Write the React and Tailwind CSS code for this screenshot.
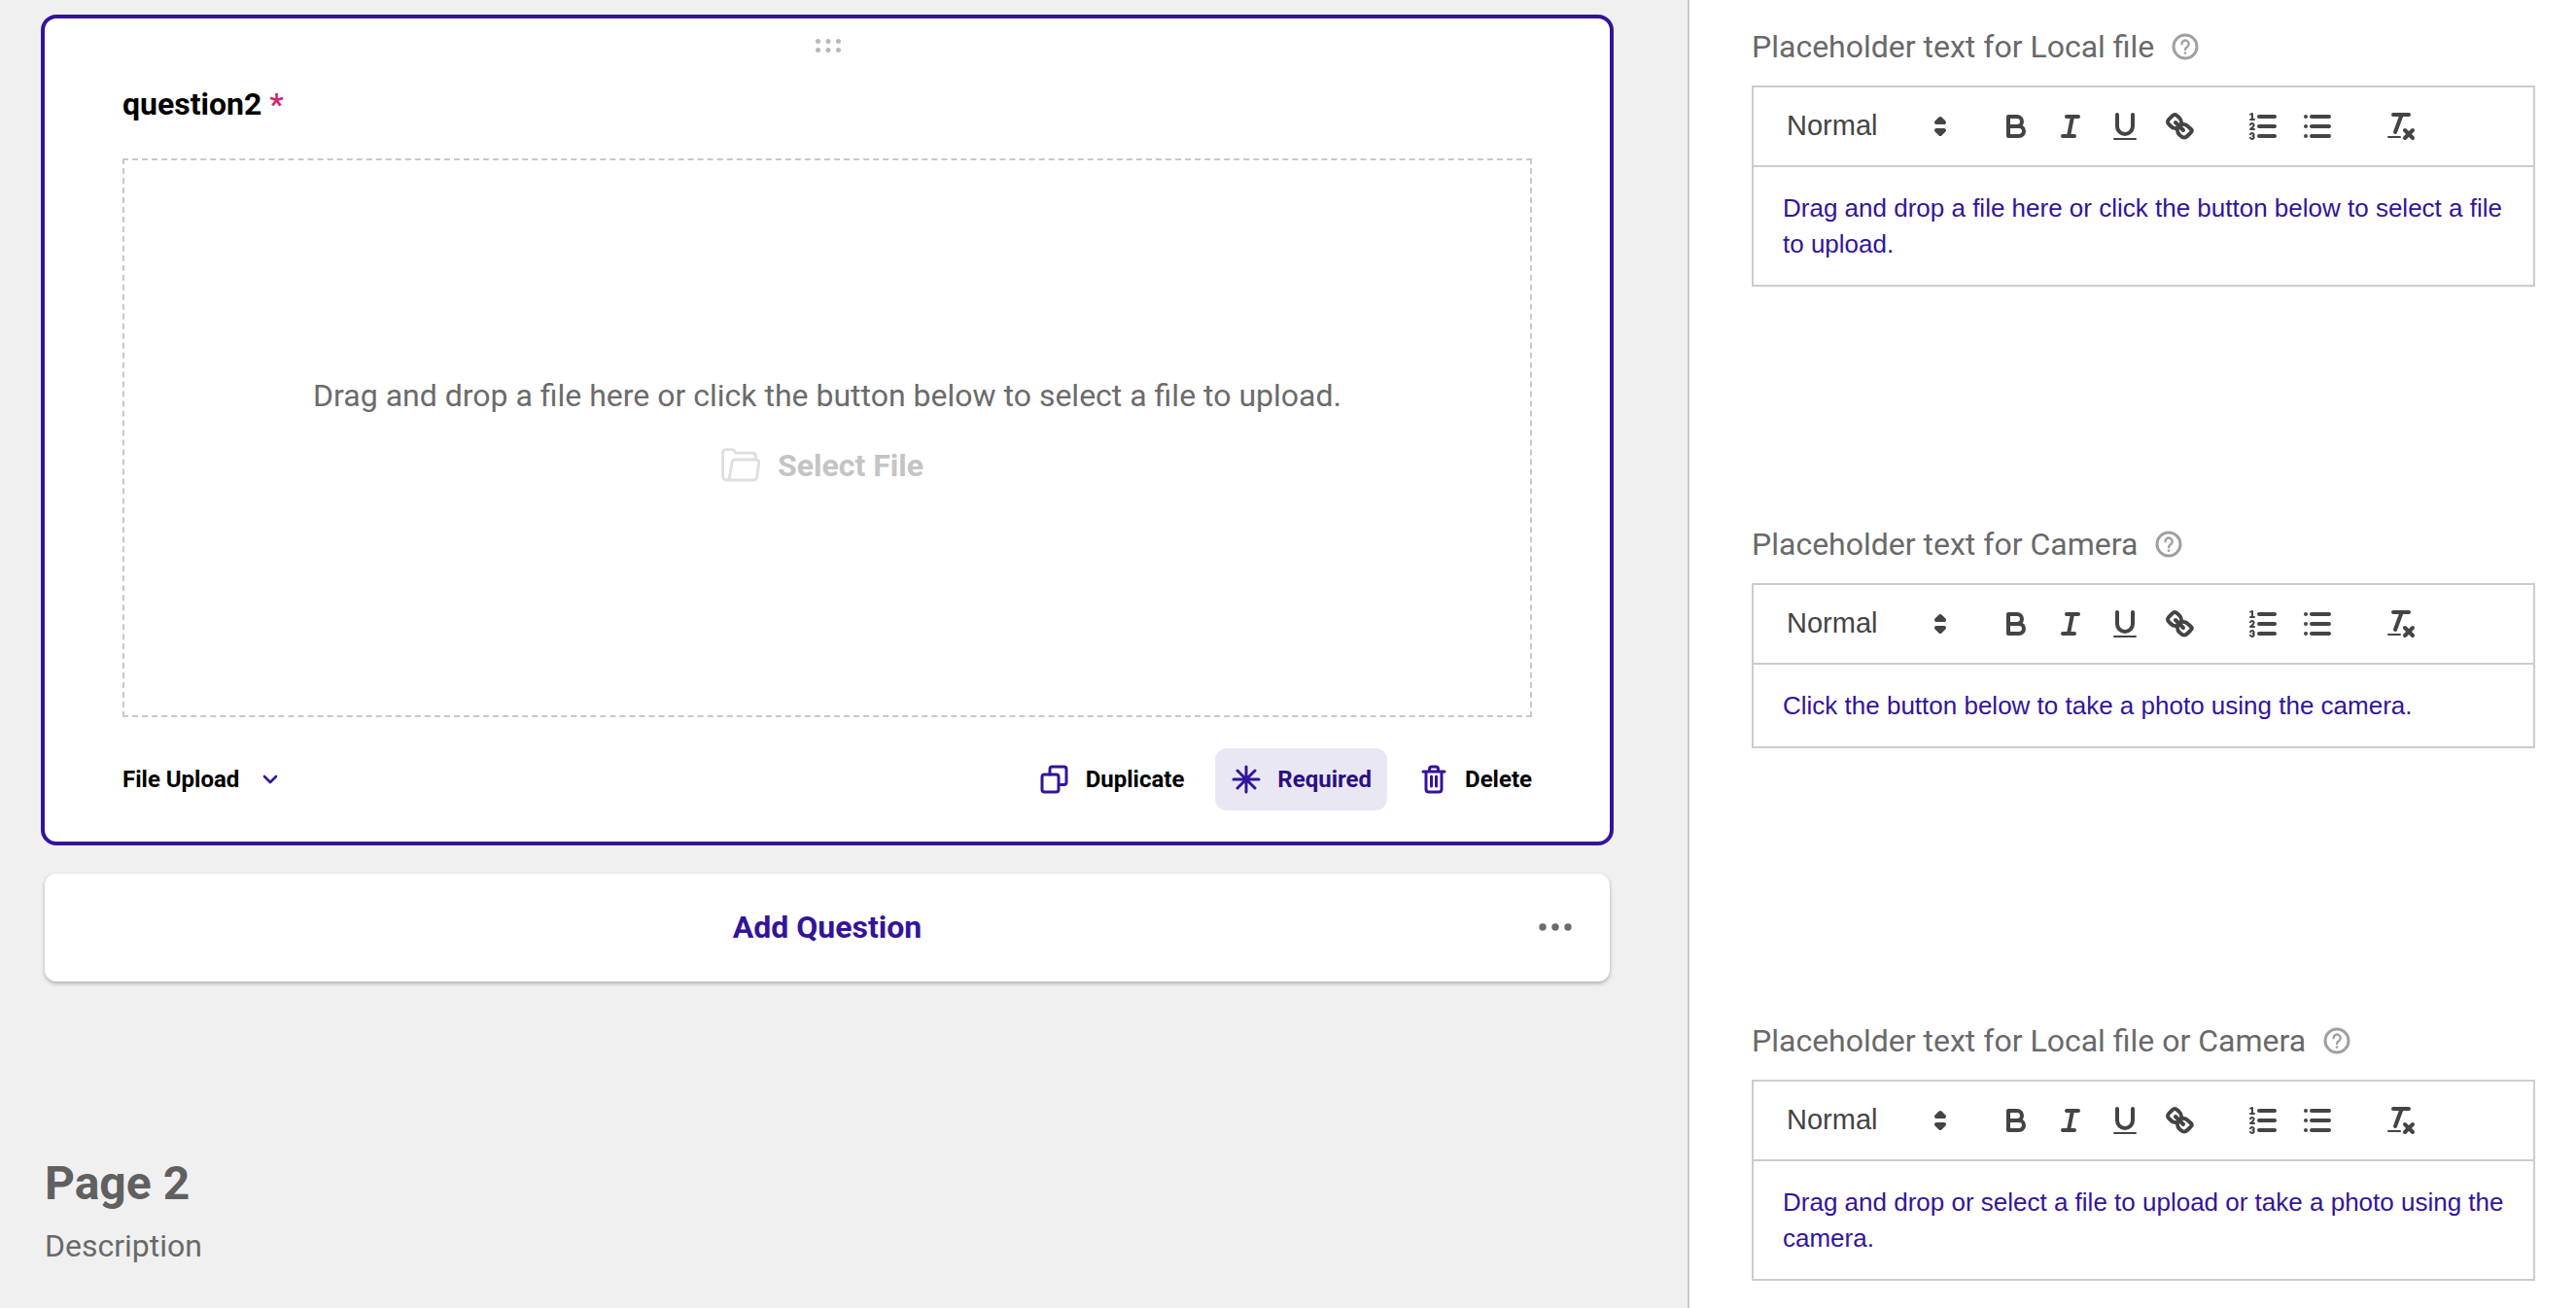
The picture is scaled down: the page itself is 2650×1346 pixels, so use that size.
import React from "react";

const P = "#33149b";

function Stroke({ children, className = "" }) {
  return (
    <svg viewBox="0 0 18 18" width="36" height="36" fill="none" stroke="#444" strokeWidth="2" strokeLinecap="round" strokeLinejoin="round" className={className}>
      {children}
    </svg>
  );
}

function Btn({ children }) {
  return <div className="w-14 h-12 flex items-center justify-center">{children}</div>;
}

function Toolbar() {
  return (
    <div className="h-[82px] border-b-2 border-[#cccccc] pl-4 flex items-center">
      <div className="w-[196px] h-12 mr-[30px] flex items-center justify-between pl-[18px] pr-[2px] text-[29px] text-[#444444] font-['Liberation_Sans',sans-serif]">
        <span>Normal</span>
        <svg viewBox="0 0 18 18" width="36" height="36" fill="#444" stroke="#444" strokeWidth="2" strokeLinejoin="round">
          <polygon points="7 11 9 13 11 11 7 11" />
          <polygon points="7 7 9 5 11 7 7 7" />
        </svg>
      </div>
      <div className="flex mr-[30px]">
        <Btn>
          <Stroke>
            <path d="M5,4H9.5A2.5,2.5,0,0,1,12,6.5v0A2.5,2.5,0,0,1,9.5,9H5A0,0,0,0,1,5,9V4A0,0,0,0,1,5,4Z" />
            <path d="M5,9h5.5A2.5,2.5,0,0,1,13,11.5v0A2.5,2.5,0,0,1,10.5,14H5a0,0,0,0,1,0,0V9A0,0,0,0,1,5,9Z" />
          </Stroke>
        </Btn>
        <Btn>
          <Stroke>
            <line x1="7" x2="13" y1="4" y2="4" />
            <line x1="5" x2="11" y1="14" y2="14" />
            <line x1="8" x2="10" y1="14" y2="4" />
          </Stroke>
        </Btn>
        <Btn>
          <Stroke>
            <path d="M5,3V9a4.012,4.012,0,0,0,4,4H9a4.012,4.012,0,0,0,4-4V3" />
            <rect x="3" y="15" width="12" height="1" rx=".5" ry=".5" fill="#444" stroke="none" />
          </Stroke>
        </Btn>
        <Btn>
          <Stroke>
            <line x1="7" x2="11" y1="7" y2="11" />
            <path d="M8.9,4.577a3.476,3.476,0,0,1,.36,4.679A3.476,3.476,0,0,1,4.577,8.9C3.185,7.5,2.231,6.754,3.68,5.3L5.3,3.68C6.754,2.231,7.5,3.185,8.9,4.577Z" />
            <path d="M13.423,9.1a3.476,3.476,0,0,0-4.679-.36,3.476,3.476,0,0,0,.36,4.679c1.392,1.392,2.5,2.045,3.949.6l1.62-1.62C16.45,10.95,14.815,10.492,13.423,9.1Z" />
          </Stroke>
        </Btn>
      </div>
      <div className="flex mr-[30px]">
        <Btn>
          <Stroke>
            <line x1="7" x2="15" y1="4" y2="4" />
            <line x1="7" x2="15" y1="9" y2="9" />
            <line x1="7" x2="15" y1="14" y2="14" />
            <line x1="2.5" x2="4.5" y1="5.5" y2="5.5" strokeWidth="1" />
            <path fill="#444" stroke="none" d="M3.5,6A0.5,0.5,0,0,1,3,5.5V3.085l-0.276.138A0.5,0.5,0,0,1,2.053,3c-0.124-.247-0.023-0.324.224-0.447l1-.5A0.5,0.5,0,0,1,4,2.5v3A0.5,0.5,0,0,1,3.5,6Z" />
            <path strokeWidth="1" d="M4.5,10.5h-2c0-.234,1.85-1.076,1.85-2.234A0.959,0.959,0,0,0,2.5,8.156" />
            <path strokeWidth="1" d="M2.5,14.846a0.959,0.959,0,0,0,1.85-.109A0.7,0.7,0,0,0,3.75,14a0.688,0.688,0,0,0,.6-0.736,0.959,0.959,0,0,0-1.85-.109" />
          </Stroke>
        </Btn>
        <Btn>
          <Stroke>
            <line x1="6" x2="15" y1="4" y2="4" />
            <line x1="6" x2="15" y1="9" y2="9" />
            <line x1="6" x2="15" y1="14" y2="14" />
            <line x1="3" x2="3" y1="4" y2="4" />
            <line x1="3" x2="3" y1="9" y2="9" />
            <line x1="3" x2="3" y1="14" y2="14" />
          </Stroke>
        </Btn>
      </div>
      <Btn>
        <Stroke>
          <line x1="5" x2="13" y1="3" y2="3" />
          <line x1="6" x2="9.35" y1="12" y2="3" />
          <line x1="11" x2="15" y1="11" y2="15" />
          <line x1="15" x2="11" y1="11" y2="15" />
          <rect x="2" y="14" width="7" height="1" rx=".5" ry=".5" fill="#444" stroke="none" />
        </Stroke>
      </Btn>
    </div>
  );
}

function Help() {
  return (
    <svg viewBox="0 0 28 28" width="28" height="28" fill="none" stroke="#a0a0a0" strokeWidth="3" strokeLinecap="round">
      <circle cx="14" cy="14" r="12" />
      <path strokeWidth="2.4" d="M10.5 11.2a3.6 3.6 0 1 1 5.6 3c-1.400.9-2.100 1.500-2.100 2.900" />
      <circle cx="14" cy="20.6" r="0.6" strokeWidth="1.6" />
    </svg>
  );
}

function Field({ label, lines }) {
  return (
    <div className="h-[511.5px] shrink-0 pt-[24px] box-border">
      <div className="flex items-center gap-[18px] h-12 mb-[16px] text-[32px] text-[#696969]">
        <span>{label}</span>
        <Help />
      </div>
      <div className="w-[806px] border-2 border-[#cccccc]">
        <Toolbar />
        <div className="px-[30px] pt-6 pb-[23px] text-[26px] leading-[37px] text-[#33149b] font-['Liberation_Sans',sans-serif]">
          {lines.map((l) => (
            <div key={l}>{l}</div>
          ))}
        </div>
      </div>
    </div>
  );
}

function Action({ icon, label, active, last }) {
  return (
    <div
      className={
        "h-16 flex items-center gap-4 pl-4 rounded-xl text-[24px] font-bold " +
        (last ? "pr-0 " : "pr-4 ") +
        (active ? "bg-[#e9e7f4] text-[#2a1080]" : "text-black")
      }
    >
      {icon}
      <span>{label}</span>
    </div>
  );
}

const iconProps = { viewBox: "0 0 32 32", width: 32, height: 32, fill: "none", stroke: P, strokeWidth: 3, strokeLinecap: "round", strokeLinejoin: "round" };

export default function App() {
  return (
    <div className="w-[2650px] h-[1346px] flex overflow-hidden bg-[#f0f0f0] font-['Roboto',sans-serif]">
      <div className="w-[1736px] shrink-0 pt-[15px]">
        <div className="ml-[42px] w-[1618px] h-[855px] box-border border-4 border-[#33149b] rounded-2xl bg-white px-20 pt-[21px] pb-8 flex flex-col">
          <div className="flex justify-center h-[14px] pl-[2px]">
            <svg viewBox="0 0 26 14" width="26" height="14" fill="#b8b8b8">
              <circle cx="2.5" cy="2.5" r="2.500" />
              <circle cx="13" cy="2.5" r="2.500" />
              <circle cx="23.5" cy="2.5" r="2.500" />
              <circle cx="2.5" cy="11.5" r="2.500" />
              <circle cx="13" cy="11.5" r="2.500" />
              <circle cx="23.5" cy="11.5" r="2.500" />
            </svg>
          </div>
          <div className="mt-[29px] mb-8 h-12 leading-[48px] text-[32px] font-bold text-black">
            question2 <span className="text-[#d6246e] font-semibold">*</span>
          </div>
          <div className="h-[575px] border-2 border-dashed border-[#c8c8c8] flex flex-col items-center justify-center">
            <div className="h-12 leading-[48px] text-[32px] text-[#6b6b6b]">
              Drag and drop a file here or click the button below to select a file to upload.
            </div>
            <div className="mt-2 py-4 pr-[10px] flex items-center gap-[18px] text-[32px] leading-[48px] font-bold text-[#c4c4c4]">
              <svg viewBox="0 0 40 36" width="40" height="36" fill="none" stroke="#dedede" strokeWidth="2.8" strokeLinecap="round" strokeLinejoin="round">
                <path d="M5 33c-2 0-3.400-1.400-3.400-3.400V5c0-2 1.400-3.400 3.400-3.400h6.400c1.600 0 2.600 1 3.200 3.600H32c2 0 3.400 1.400 3.400 3.400v3" />
                <path d="M5 33c2 0 3-1.200 3.400-3l2.600-15c.4-2 1.800-3 3.600-3h21.200c2 0 3.400 1.600 3 3.600l-2.400 14.600c-.4 2-1.800 2.800-3.600 2.800H5z" />
              </svg>
              <span>Select File</span>
            </div>
          </div>
          <div className="mt-8 h-16 flex items-center justify-between">
            <div className="flex items-center gap-6 text-[24px] font-bold text-black">
              <span>File Upload</span>
              <svg viewBox="0 0 16 10" width="16" height="10" fill="none" stroke={P} strokeWidth="2.6" strokeLinecap="round" strokeLinejoin="round">
                <path d="M2 2l6 6 6-6" />
              </svg>
            </div>
            <div className="flex items-center gap-4">
              <Action
                label="Duplicate"
                icon={
                  <svg {...iconProps}>
                    <rect x="3" y="11" width="17" height="18" rx="2.5" />
                    <path d="M11 11V5.500C11 4 12 3 13.500 3h12C27 3 28 4 28 5.500V19c0 1.500-1 2.500-2.500 2.500H22" />
                  </svg>
                }
              />
              <Action
                active
                label="Required"
                icon={
                  <svg {...iconProps}>
                    <path d="M16 3v26M3 16h26M7 7l18 18M25 7L7 25" />
                  </svg>
                }
              />
              <Action
                last
                label="Delete"
                icon={
                  <svg {...iconProps}>
                    <path d="M5 8h22M8 8v18c0 2 1 3 3 3h10c2 0 3-1 3-3V8M11.500 8V5.500C11.500 4 12.500 3 14 3h4c1.500 0 2.500 1 2.500 2.500V8M13.500 13v10M18.500 13v10" />
                  </svg>
                }
              />
            </div>
          </div>
        </div>
        <div className="relative ml-[46px] mt-[29px] w-[1610px] h-[111px] pb-[1px] bg-white rounded-xl shadow-[0_2px_4px_rgba(0,0,0,0.28)] flex items-center justify-center">
          <span className="text-[32px] font-bold text-[#33149b]">Add Question</span>
          <svg className="absolute right-[39px] top-[51px]" viewBox="0 0 34 8" width="34" height="8" fill="#6b6b6b">
            <circle cx="4" cy="4" r="3.700" />
            <circle cx="17" cy="4" r="3.700" />
            <circle cx="30" cy="4" r="3.700" />
          </svg>
        </div>
        <div className="ml-[46px] mt-[176px] text-[48px] leading-[64px] font-bold text-[#606060]">Page 2</div>
        <div className="ml-[46px] mt-[8px] text-[32px] leading-[48px] text-[#696969]">Description</div>
      </div>
      <div className="flex-1 bg-white border-l-2 border-[#cacaca] pl-16 flex flex-col overflow-hidden">
        <Field
          label="Placeholder text for Local file"
          lines={["Drag and drop a file here or click the button below to select a file", "to upload."]}
        />
        <Field label="Placeholder text for Camera" lines={["Click the button below to take a photo using the camera."]} />
        <Field
          label="Placeholder text for Local file or Camera"
          lines={["Drag and drop or select a file to upload or take a photo using the", "camera."]}
        />
      </div>
    </div>
  );
}
